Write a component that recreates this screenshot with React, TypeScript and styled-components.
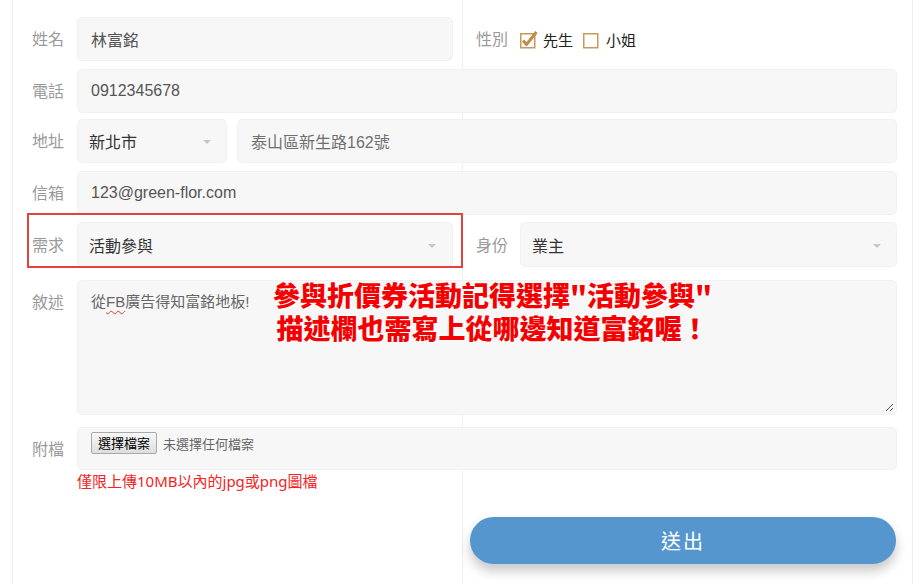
import styled, { createGlobalStyle } from "styled-components";

const GlobalStyle = createGlobalStyle`
  html, body {
    margin: 0;
    padding: 0;
    background: #fff;
  }
  body {
    font-family: "Liberation Sans", "Noto Sans CJK TC", sans-serif;
    overflow: hidden;
  }
  * {
    box-sizing: border-box;
  }
`;

const cjk = `"Noto Sans", "Noto Sans CJK TC", sans-serif`;

const Sheet = styled.div`
  position: relative;
  margin-left: 12px;
  width: 901px;
  height: 584px;
  padding: 17px 15px 0 14px;
  border-left: 1px solid #ededed;
  border-right: 1px solid #ededed;
  background: linear-gradient(#ededed, #ededed) no-repeat 449px 0 / 1px 100%;
`;

const Row = styled.div<{ $mb?: number; $top?: boolean }>`
  display: flex;
  align-items: ${(p) => (p.$top ? "flex-start" : "center")};
  margin-bottom: ${(p) => p.$mb ?? 7}px;
`;

const Half = styled.div<{ $left?: boolean; $marked?: boolean }>`
  position: relative;
  display: flex;
  align-items: center;
  flex: ${(p) => (p.$left ? "0 0 435px" : "1 1 auto")};
  padding-right: ${(p) => (p.$left ? 9 : 0)}px;

  ${(p) =>
    p.$marked &&
    `
    &::after {
      content: "";
      position: absolute;
      top: -9px;
      bottom: -1px;
      left: 0;
      right: -1px;
      border: 2px solid #e3433d;
      pointer-events: none;
    }
  `}
`;

const Label = styled.label<{ $w: number; $pl: number; $mt?: number }>`
  flex: 0 0 ${(p) => p.$w}px;
  padding-left: ${(p) => p.$pl}px;
  margin-top: ${(p) => p.$mt ?? 0}px;
  color: #9a9a9a;
  font-family: ${cjk};
  font-size: 16px;
  line-height: 20px;
`;

const Field = styled.div<{ $w?: number; $tone?: "value" | "dark" | "muted"; $h?: number }>`
  position: relative;
  flex: ${(p) => (p.$w ? `0 0 ${p.$w}px` : "1 1 auto")};
  height: ${(p) => p.$h ?? 44}px;
  display: flex;
  align-items: center;
  padding: 0 13px;
  background: #f7f7f7;
  border: 1px solid #f1f1f1;
  border-radius: 5px;
  font-size: 16px;
  color: ${(p) => (p.$tone === "dark" ? "#333" : p.$tone === "muted" ? "#6f6f6f" : "#555")};
`;

const Select = styled(Field)<{ $caret?: number }>`
  padding-left: 11px;

  &::after {
    content: "";
    position: absolute;
    right: ${(p) => p.$caret ?? 16}px;
    top: 50%;
    margin-top: -1px;
    border-left: 4px solid transparent;
    border-right: 4px solid transparent;
    border-top: 4px solid #c6c6c6;
  }
`;

const TextArea = styled(Field)`
  align-items: flex-start;
  padding-top: 11px;
  font-size: 15px;
  line-height: 20px;
  color: #666;
`;

const Squiggle = styled.span`
  text-decoration: underline wavy #e0342a;
  text-decoration-thickness: 1px;
  text-underline-offset: 3px;
`;

const Grip = styled.svg`
  position: absolute;
  right: 2px;
  bottom: 2px;
`;

const Choice = styled.span`
  display: inline-flex;
  align-items: center;
  margin-right: 10px;
  color: #222;
  font-family: ${cjk};
  font-size: 15px;
  gap: 5px;
`;

const FileField = styled(Field)`
  align-items: flex-start;
  padding-top: 4px;
`;

const FileButton = styled.button`
  height: 22px;
  padding: 0 6px;
  border: 1px solid #a9a9a9;
  border-radius: 2px;
  background: linear-gradient(#f8f8f8, #dddddd);
  color: #000;
  font-family: ${cjk};
  font-size: 13px;
  line-height: 18px;
`;

const FileHint = styled.span`
  margin-left: 6px;
  margin-top: 2px;
  color: #666;
  font-family: ${cjk};
  font-size: 13px;
`;

const Note = styled.div`
  margin: 0 0 0 50px;
  color: #f52222;
  font-family: ${cjk};
  font-size: 15px;
  line-height: 22px;
`;

const Annotation = styled.div`
  position: absolute;
  left: 195px;
  top: -3px;
  color: #f40000;
  font-family: "Noto Sans CJK TC", serif;
  font-weight: 900;
  font-size: 27px;
  line-height: 33px;
  text-align: center;
  white-space: nowrap;
  text-shadow: 0 0 1px #fff, 1px 1px 0 #fff, -1px -1px 0 #fff;
`;

const Submit = styled.button`
  margin: 25px 0 0 8px;
  width: 426px;
  height: 47px;
  border: none;
  border-radius: 24px;
  background: #5596cf;
  color: #fff;
  font-family: ${cjk};
  font-size: 20px;
  letter-spacing: 2px;
  box-shadow: 0 7px 12px rgba(0, 0, 0, 0.22);
`;

function Checkbox({ checked }: { checked?: boolean }) {
  return (
    <svg width="18" height="19" viewBox="0 0 18 19">
      <rect x="0.75" y="3.75" width="14" height="14" fill="#fff" stroke="#c59a5c" strokeWidth="1.5" />
      {checked && (
        <path d="M3 10.5 L6.5 14.5 L16.5 2" fill="none" stroke="#c08c4c" strokeWidth="3" strokeLinejoin="round" />
      )}
    </svg>
  );
}

export default function App() {
  return (
    <>
      <GlobalStyle />
      <Sheet>
        <Row $mb={8}>
          <Half $left>
            <Label $w={50} $pl={5}>姓名</Label>
            <Field>林富銘</Field>
          </Half>
          <Half>
            <Label $w={58} $pl={14}>性別</Label>
            <Choice>
              <Checkbox checked />
              先生
            </Choice>
            <Choice>
              <Checkbox />
              小姐
            </Choice>
          </Half>
        </Row>

        <Row $mb={6}>
          <Label $w={50} $pl={5}>電話</Label>
          <Field>0912345678</Field>
        </Row>

        <Row $mb={8}>
          <Label $w={50} $pl={5}>地址</Label>
          <Select $w={150} $tone="dark" $caret={15}>新北市</Select>
          <div style={{ width: 10 }} />
          <Field $tone="muted">泰山區新生路162號</Field>
        </Row>

        <Row $mb={7}>
          <Label $w={50} $pl={5}>信箱</Label>
          <Field>123@green-flor.com</Field>
        </Row>

        <Row $mb={13}>
          <Half $left $marked>
            <Label $w={50} $pl={5}>需求</Label>
            <Select $h={45} $tone="dark" $caret={16}>活動參與</Select>
          </Half>
          <Half>
            <Label $w={58} $pl={14}>身份</Label>
            <Select $h={45} $tone="dark" $caret={15}>業主</Select>
          </Half>
        </Row>

        <Row $mb={12} $top>
          <Label $w={50} $pl={5} $mt={12}>敘述</Label>
          <TextArea $h={135}>
            <span>
              從<Squiggle>FB</Squiggle>廣告得知富銘地板!
            </span>
            <Grip width="10" height="10" viewBox="0 0 10 10">
              <path d="M9 2 L2 9 M9 6 L6 9" stroke="#555" strokeWidth="1" />
            </Grip>
            <Annotation>
              參與折價券活動記得選擇"活動參與"
              <br />
              描述欄也需寫上從哪邊知道富銘喔！
            </Annotation>
          </TextArea>
        </Row>

        <Row $mb={0}>
          <Label $w={50} $pl={5}>附檔</Label>
          <FileField $h={43}>
            <FileButton type="button">選擇檔案</FileButton>
            <FileHint>未選擇任何檔案</FileHint>
          </FileField>
        </Row>
        <Note>僅限上傳10MB以內的jpg或png圖檔</Note>

        <Row $mb={0}>
          <Half $left />
          <Half>
            <Submit type="button">送出</Submit>
          </Half>
        </Row>
      </Sheet>
    </>
  );
}
